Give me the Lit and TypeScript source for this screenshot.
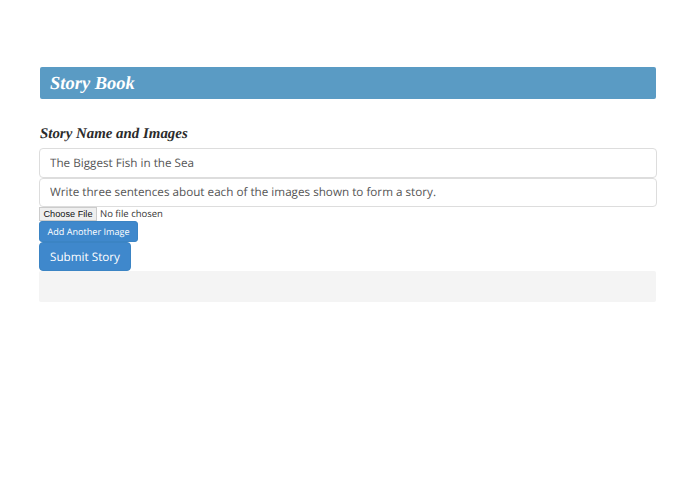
import { LitElement, html, css } from "lit";
import { customElement } from "lit/decorators.js";

@customElement("app-root")
export class AppRoot extends LitElement {
  static styles = css`
    :host {
      display: block;
      box-sizing: border-box;
      width: 695px;
      height: 494px;
      padding: 67px 39px 0 39px;
      background: #fff;
      font-family: "Open Sans", sans-serif;
      color: #444;
      text-rendering: geometricPrecision;
    }
    * { box-sizing: border-box; }
    .wrap { width: 617.5px; display: flex; flex-direction: column; align-items: flex-start; }
    .bar {
      width: 616.5px;
      margin-left: 0.5px;
      height: 32px;
      background: #5a9bc4;
      border-radius: 2px;
      padding: 3px 10.5px 0;
      display: flex;
      align-items: center;
      color: #fff;
      font-family: "Liberation Serif", serif;
      font-style: italic;
      font-weight: 700;
      font-size: 18.5px;
    }
    h2 {
      margin: 26px 0 4px;
      padding-left: 1px;
      height: 19px;
      line-height: 19px;
      font-family: "Liberation Serif", serif;
      font-style: italic;
      font-weight: 700;
      font-size: 14.9px;
      color: #2b2b2b;
    }
    .field {
      display: block;
      width: 617.5px;
      height: 29.5px;
      border: 1px solid #ddd;
      border-radius: 4px;
      padding: 0 10px;
      font: 400 11.7px "Open Sans", sans-serif;
      text-rendering: geometricPrecision;
      color: #555;
      background: #fff;
      outline: none;
    }
    .file {
      display: block;
      height: 14px;
      font: 400 9.5px "Open Sans", sans-serif;
      text-rendering: geometricPrecision;
      color: #333;
    }
    .file::file-selector-button {
      height: 14px;
      width: 58px;
      margin: 0 3px 0 0;
      padding: 0;
      border: 1px solid #ccc;
      border-radius: 0;
      background: #efefef;
      color: #111;
      font: 400 9.2px "Liberation Sans", sans-serif;
    }
    .btn {
      border: 1px solid #3b84c4;
      background: #3f88cc;
      color: #fff;
      font-family: "Open Sans", sans-serif;
      text-rendering: geometricPrecision;
      padding: 0;
    }
    .small { width: 99px; height: 21px; font-size: 9.1px; border-radius: 3px; }
    .large { width: 92px; height: 29px; font-size: 11.7px; border-radius: 4px; }
    .well {
      width: 617px;
      height: 30.5px;
      background: #f4f4f4;
      border-radius: 2px;
    }
  `;

  render() {
    return html`
      <div class="wrap">
        <div class="bar">Story Book</div>
        <h2>Story Name and Images</h2>
        <input class="field" type="text" .value=${"The Biggest Fish in the Sea"} />
        <input class="field" type="text" .value=${"Write three sentences about each of the images shown to form a story."} />
        <input class="file" type="file" />
        <button class="btn small">Add Another Image</button>
        <button class="btn large">Submit Story</button>
        <div class="well"></div>
      </div>
    `;
  }
}
